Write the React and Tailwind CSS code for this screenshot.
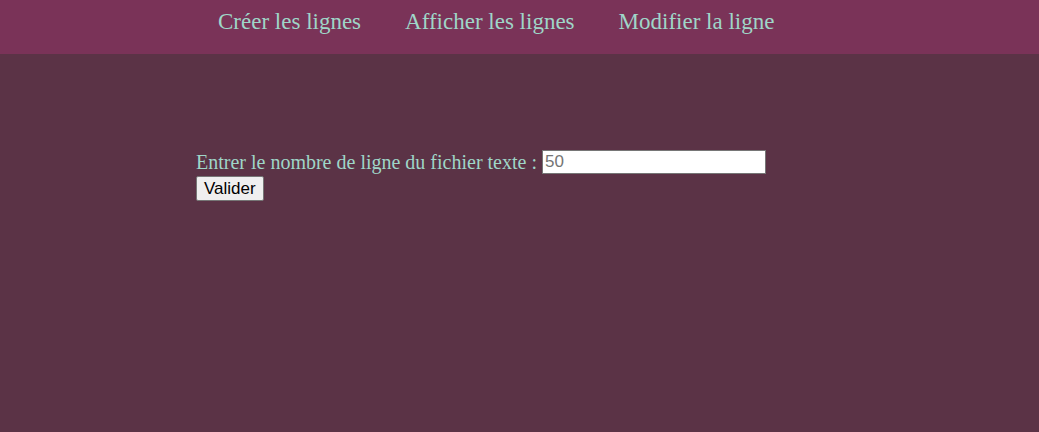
export default function App() {
  return (
    <div className="min-h-[432px] bg-[#5b3346] font-['Liberation_Serif',serif]">
      <nav className="h-[54px] bg-[#7a3358] flex items-start pl-[218px] pt-[5px] gap-[44px] text-[23px] text-[#9fd6c8]">
        <a>Créer les lignes</a>
        <a>Afficher les lignes</a>
        <a>Modifier la ligne</a>
      </nav>
      <form className="pl-[196px] pt-[96px]">
        <div className="flex items-center h-[24px]">
          <label className="text-[20px] leading-none text-[#9fd6c8] mr-[5px]">Entrer le nombre de ligne du fichier texte :</label>
          <input
            type="text"
            placeholder="50"
            className="w-[224px] h-[24px] bg-white border border-[#767676] px-[2px] text-[17px] font-['Liberation_Sans',sans-serif] text-black placeholder:text-[#757575] outline-none"
          />
        </div>
        <button
          type="button"
          className="mt-[2px] h-[25px] px-[7px] bg-[#efefef] border border-[#767676] rounded-[2px] text-[17px] text-black font-['Liberation_Sans',sans-serif] leading-none"
        >
          Valider
        </button>
      </form>
    </div>
  );
}
